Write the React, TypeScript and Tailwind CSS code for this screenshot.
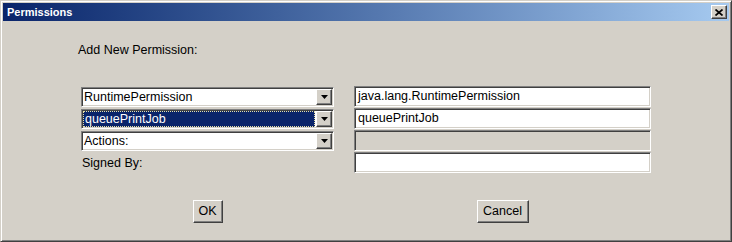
const sunken =
  'border border-t-[#808080] border-l-[#808080] border-r-white border-b-white shadow-[inset_1px_1px_0_#404040,inset_-1px_-1px_0_#d4d0c8]';
const raised =
  'border border-t-white border-l-white border-r-[#404040] border-b-[#404040] shadow-[inset_-1px_-1px_0_#808080,inset_1px_1px_0_#d4d0c8]';

function Arrow() {
  return (
    <div className={`flex w-[16px] items-center justify-center bg-[#d4d0c8] ${raised}`}>
      <svg width="7" height="4" viewBox="0 0 7 4">
        <path d="M0 0h7L3.5 4z" fill="#000" />
      </svg>
    </div>
  );
}

function Combo({ value, selected = false }: { value: string; selected?: boolean }) {
  return (
    <div className={`flex h-[20px] items-stretch bg-white p-[1px] ${sunken}`}>
      <div
        className={`flex flex-1 items-center pl-[1px] leading-none ${
          selected ? 'mr-[1px] border border-dotted border-[#e6e0a8] bg-[#0a246a] text-white' : 'text-black'
        }`}
      >
        {value}
      </div>
      <Arrow />
    </div>
  );
}

function Field({ value = '', disabled = false }: { value?: string; disabled?: boolean }) {
  return (
    <div
      className={`flex h-[21px] items-center px-[3px] leading-none text-black ${sunken} ${
        disabled ? 'bg-[#d4d0c8]' : 'bg-white'
      }`}
    >
      {value}
    </div>
  );
}

function Button({ label, width }: { label: string; width: string }) {
  return (
    <button
      className={`flex h-[23px] items-center justify-center bg-[#d4d0c8] text-black ${width} ${raised}`}
    >
      {label}
    </button>
  );
}

export default function App() {
  return (
    <div
      className="flex h-[242px] w-[732px] flex-col border border-t-[#d4d0c8] border-l-[#d4d0c8] border-r-[#404040] border-b-[#404040] bg-[#d4d0c8] p-[1px] text-[12.5px] shadow-[inset_1px_1px_0_#ffffff,inset_-1px_-1px_0_#808080]"
      style={{ fontFamily: '"Liberation Sans", Arial, sans-serif' }}
    >
      <div className="mx-[1px] mt-[1px] flex h-[18px] items-center justify-between bg-gradient-to-r from-[#0a246a] to-[#a6caf0] pr-[2px] pl-[4px]">
        <span className="text-[11px] font-bold text-white">Permissions</span>
        <button className={`flex h-[14px] w-[16px] items-center justify-center bg-[#d4d0c8] ${raised}`}>
          <svg width="8" height="7" viewBox="0 0 8 7">
            <path d="M0.5 0.5L7.5 6.5M7.5 0.5L0.5 6.5" stroke="#000" strokeWidth="1.7" />
          </svg>
        </button>
      </div>

      <div className="flex flex-1 flex-col pl-[76px]">
        <div className="mt-[22px] h-[14px] leading-[14px] text-black">Add New Permission:</div>

        <div className="mt-[29px] ml-[3px] grid grid-cols-[253px_297px] grid-rows-[22px_22px_22px_22px] gap-x-[20px]">
          <div className="flex items-center">
            <div className="w-full">
              <Combo value="RuntimePermission" />
            </div>
          </div>
          <Field value="java.lang.RuntimePermission" />
          <div className="flex items-center">
            <div className="w-full">
              <Combo value="queuePrintJob" selected />
            </div>
          </div>
          <Field value="queuePrintJob" />
          <div className="flex items-center">
            <div className="w-full">
              <Combo value="Actions:" />
            </div>
          </div>
          <Field disabled />
          <div className="flex items-center pl-[1px] text-black">Signed By:</div>
          <Field />
        </div>

        <div className="mt-[26px] ml-[3px] grid grid-cols-[253px_297px] gap-x-[20px]">
          <div className="flex justify-center">
            <Button label="OK" width="w-[30px]" />
          </div>
          <div className="flex justify-center">
            <Button label="Cancel" width="w-[52px]" />
          </div>
        </div>
      </div>
    </div>
  );
}
